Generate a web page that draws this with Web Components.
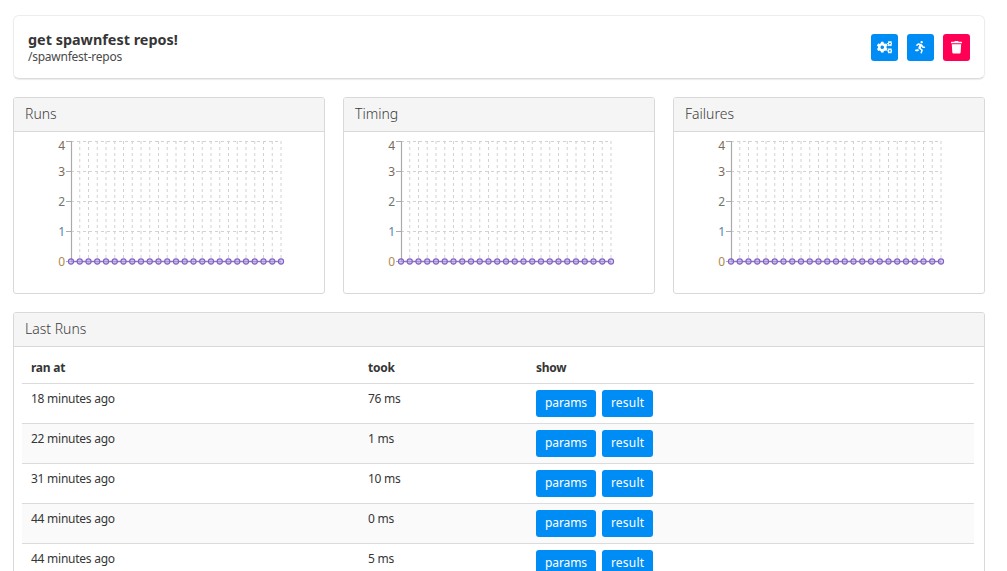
<!DOCTYPE html>
<html lang="en"><head><meta charset="utf-8"><title>get spawnfest repos!</title>
<style>
html,body{margin:0;height:571px;overflow:hidden;background:#fff}
body{font-family:"Noto Sans","Open Sans",sans-serif;color:#363636;font-size:12px}
</style></head><body>
<app-page>
  <page-header title-text="get spawnfest repos!" path="/spawnfest-repos"></page-header>
  <chart-row>
    <app-panel heading="Runs"><line-chart></line-chart></app-panel>
    <app-panel heading="Timing"><line-chart></line-chart></app-panel>
    <app-panel heading="Failures"><line-chart></line-chart></app-panel>
  </chart-row>
  <app-panel heading="Last Runs"><runs-table></runs-table></app-panel>
</app-page>
<script>
const ICONS={
cogs:['0 0 640 512','M512.1 191l-8.2 14.3c-3 5.3-9.4 7.5-15.1 5.4-11.8-4.4-22.6-10.7-32.1-18.6-4.6-3.8-5.8-10.5-2.8-15.7l8.2-14.3c-6.9-8-12.3-17.3-15.9-27.4h-16.5c-6 0-11.2-4.3-12.2-10.3-2-12-2.1-24.6 0-37.1 1-6 6.2-10.4 12.2-10.4h16.5c3.6-10.1 9-19.4 15.9-27.4l-8.2-14.3c-3-5.2-1.9-11.9 2.8-15.7 9.5-7.9 20.4-14.2 32.1-18.6 5.7-2.1 12.1.1 15.1 5.4l8.2 14.3c10.5-1.9 21.2-1.9 31.7 0L552 6.3c3-5.3 9.4-7.5 15.1-5.4 11.8 4.4 22.6 10.7 32.1 18.6 4.6 3.8 5.8 10.5 2.8 15.7l-8.2 14.3c6.9 8 12.3 17.3 15.9 27.4h16.5c6 0 11.2 4.3 12.2 10.3 2 12 2.1 24.6 0 37.1-1 6-6.2 10.4-12.2 10.4h-16.5c-3.6 10.1-9 19.4-15.9 27.4l8.2 14.3c3 5.2 1.9 11.9-2.8 15.7-9.5 7.9-20.4 14.2-32.1 18.6-5.7 2.1-12.1-.1-15.1-5.4l-8.2-14.3c-10.4 1.9-21.2 1.9-31.7 0zm-10.5-58.8c38.5 29.6 82.4-14.3 52.8-52.8-38.5-29.7-82.4 14.3-52.8 52.8zM386.3 286.1l33.7 16.8c10.1 5.8 14.5 18.1 10.5 29.1-8.9 24.2-26.4 46.4-42.6 65.8-7.4 8.9-20.2 11.1-30.3 5.3l-29.1-16.8c-16 13.7-34.6 24.6-54.9 31.7v33.6c0 11.6-8.3 21.6-19.7 23.6-24.6 4.2-50.4 4.4-75.9 0-11.5-2-20-11.9-20-23.6V418c-20.3-7.2-38.9-18-54.9-31.7L74 403c-10 5.8-22.9 3.6-30.3-5.3-16.2-19.4-33.3-41.6-42.2-65.7-4-10.9.4-23.2 10.5-29.1l33.3-16.8c-3.9-20.9-3.9-42.4 0-63.4L12 205.8c-10.1-5.8-14.6-18.1-10.5-29 8.9-24.2 26-46.4 42.2-65.8 7.4-8.9 20.2-11.1 30.3-5.3l29.1 16.8c16-13.7 34.6-24.6 54.9-31.7V57.1c0-11.5 8.2-21.5 19.6-23.5 24.6-4.2 50.5-4.4 76-.1 11.5 2 20 11.9 20 23.6v33.6c20.3 7.2 38.9 18 54.9 31.7l29.1-16.8c10-5.8 22.9-3.6 30.3 5.3 16.2 19.4 33.2 41.6 42.1 65.8 4 10.9.1 23.2-10 29.1l-33.7 16.8c3.9 21 3.9 42.5 0 63.5zm-117.6 21.1c59.2-77-28.7-164.9-105.7-105.7-59.2 77 28.7 164.9 105.7 105.7zm243.4 182.7l-8.2 14.3c-3 5.3-9.4 7.5-15.1 5.4-11.8-4.4-22.6-10.7-32.1-18.6-4.6-3.8-5.8-10.5-2.8-15.7l8.2-14.3c-6.9-8-12.3-17.3-15.9-27.4h-16.5c-6 0-11.2-4.3-12.2-10.3-2-12-2.1-24.6 0-37.1 1-6 6.2-10.4 12.2-10.4h16.5c3.6-10.1 9-19.4 15.9-27.4l-8.2-14.3c-3-5.2-1.9-11.9 2.8-15.7 9.5-7.9 20.4-14.2 32.1-18.6 5.7-2.1 12.1.1 15.1 5.4l8.2 14.3c10.5-1.9 21.2-1.9 31.7 0l8.2-14.3c3-5.3 9.4-7.5 15.1-5.4 11.8 4.4 22.6 10.7 32.1 18.6 4.6 3.8 5.8 10.5 2.8 15.7l-8.2 14.3c6.9 8 12.3 17.3 15.9 27.4h16.5c6 0 11.2 4.3 12.2 10.3 2 12 2.1 24.6 0 37.1-1 6-6.2 10.4-12.2 10.4h-16.5c-3.6 10.1-9 19.4-15.9 27.4l8.2 14.3c3 5.2 1.9 11.9-2.8 15.7-9.5 7.9-20.4 14.2-32.1 18.6-5.7 2.1-12.1-.1-15.1-5.4l-8.2-14.3c-10.4 1.9-21.2 1.9-31.7 0zM501.6 431c38.5 29.6 82.4-14.3 52.8-52.8-38.5-29.6-82.4 14.3-52.8 52.8z'],
run:['0 0 416 512','M272 96c26.51 0 48-21.49 48-48S298.51 0 272 0s-48 21.49-48 48 21.49 48 48 48zM113.69 317.47l-14.8 34.52H32c-17.67 0-32 14.33-32 32s14.33 32 32 32h77.45c19.25 0 36.58-11.44 44.11-29.09l8.79-20.52-10.67-6.3c-17.32-10.23-30.06-25.37-37.99-42.61zM384 223.99h-44.03l-26.06-53.25c-12.5-25.55-35.45-44.23-61.78-50.94l-71.08-21.14c-28.3-6.8-57.77-.55-80.84 17.14l-39.67 30.41c-14.03 10.75-16.69 30.83-5.92 44.86s30.84 16.66 44.86 5.92l39.69-30.41c7.67-5.89 17.44-8 25.27-6.14l14.7 4.37-37.46 87.39c-12.62 29.48-1.31 64.01 26.3 80.31l84.98 50.17-27.47 87.73c-5.28 16.86 4.11 34.81 20.97 40.09 3.19 1 6.41 1.48 9.58 1.48 13.61 0 26.23-8.77 30.52-22.45l31.64-101.06c5.91-20.77-2.89-43.08-21.64-54.39l-61.24-36.14 31.31-78.28 20.27 41.43c8 16.34 24.92 26.89 43.11 26.89H384c17.67 0 32-14.33 32-32s-14.33-31.99-32-31.99z'],
trash:['0 0 448 512','M432 32H312l-9.4-18.7A24 24 0 0 0 281.1 0H166.8a23.72 23.72 0 0 0-21.4 13.3L136 32H16A16 16 0 0 0 0 48v32a16 16 0 0 0 16 16h416a16 16 0 0 0 16-16V48a16 16 0 0 0-16-16zM53.2 467a48 48 0 0 0 47.9 45h245.8a48 48 0 0 0 47.9-45L416 128H32z']};

function define(name,css,html){
  customElements.define(name,class extends HTMLElement{
    connectedCallback(){
      if(this.shadowRoot)return;
      const r=this.attachShadow({mode:'open'});
      r.innerHTML='<style>'+css+'</style>'+(typeof html==='function'?html(this):html);
    }
  });
}
define('app-page',':host{display:flex;flex-direction:column;gap:18px;padding:15px 22px 0 13px}','<slot></slot>');
define('chart-row',':host{display:grid;grid-template-columns:repeat(3,312px);justify-content:space-between}','<slot></slot>');
define('icon-button',`:host{display:flex;align-items:center;justify-content:center;width:27px;height:27px;border-radius:3px;background:var(--bg,#008cf5);padding-top:1px;box-sizing:border-box}
svg{fill:#fff;display:block}`,el=>{const[v,d]=ICONS[el.getAttribute('icon')];const h=12.5;const w=h*v.split(' ')[2]/512;return `<svg viewBox="${v}" style="width:${w}px;height:${h}px"><path d="${d}"/></svg>`});
define('page-header',`:host{display:flex;align-items:center;justify-content:space-between;height:62px;padding:0 14px;border:1px solid #ececec;border-bottom-color:#dcdcdc;border-radius:6px;box-shadow:0 1px 1px rgba(0,0,0,.08)}
.x{padding-top:2px}
.t{font-size:14.4px;font-weight:700;line-height:16px;color:#363636}.p{font-size:12px;line-height:17px;color:#4a4a4a;letter-spacing:-.25px}
.b{display:flex;gap:9px}`,el=>`<div class="x"><div class="t">${el.getAttribute('title-text')}</div><div class="p">${el.getAttribute('path')}</div></div>
<div class="b"><icon-button icon="cogs"></icon-button><icon-button icon="run"></icon-button><icon-button icon="trash" style="--bg:#ff0055"></icon-button></div>`);
define('app-panel',`:host{display:block;border:1px solid #d9d9d9;border-radius:3px;background:#fff}
header{height:33px;line-height:32px;padding:0 11px;background:#f5f5f5;border-bottom:1px solid #d9d9d9;font-size:14px;font-weight:300;color:#3c3c3c;border-radius:2px 2px 0 0}`,
el=>`<header>${el.getAttribute('heading')}</header><slot></slot>`);
define('line-chart',`:host{display:block;height:161px}
svg{display:block}text{font:12px "Noto Sans",sans-serif;text-anchor:end;dominant-baseline:middle}`,()=>{
  const xs=[...Array(25)].map((_,i)=>57+i*8.75);
  const ys=[9,39,69,99,129];
  const colors=['#7a6a58','#7a6a58','#6a7a70','#5a7fa8','#b08a50'];
  let s='<svg width="310" height="161" viewBox="0 0 310 161">';
  xs.slice(1).forEach(x=>s+=`<line x1="${x}" x2="${x}" y1="9" y2="133" stroke="#d2d2d2" stroke-dasharray="3 3"/>`);
  ys.slice(0,4).forEach(y=>s+=`<line x1="57" x2="267" y1="${y+.5}" y2="${y+.5}" stroke="#d2d2d2" stroke-dasharray="3 3"/>`);
  s+='<line x1="57.5" x2="57.5" y1="9" y2="129" stroke="#aaa" stroke-width="1.2"/>';
  ys.forEach((y,i)=>{s+=`<line x1="52" x2="57" y1="${y+.5}" y2="${y+.5}" stroke="#aaa"/>`;
    s+=`<text x="51" y="${i===0?15:y+2}" fill="${colors[i]}">${4-i}</text>`});
  s+='<line x1="57" x2="267" y1="129.5" y2="129.5" stroke="#8a78b8" stroke-width="1.4"/>';
  xs.forEach(x=>s+=`<circle cx="${x}" cy="129.5" r="2.6" fill="rgba(190,170,235,.55)" stroke="#8062c4" stroke-width="1.1"/>`);
  return s+'</svg>';
});
define('small-button',`:host{display:inline-flex;align-items:center;height:27px;padding:0 9px 2px;box-sizing:border-box;border-radius:3px;background:#008cf5;color:#fff;font-size:12px;letter-spacing:var(--ls,-.1px)}`,'<slot></slot>');
define('runs-table',`:host{display:block;padding:0 10px 0 8px}
.r{display:grid;grid-template-columns:337px 168px 1fr;height:39px;border-bottom:1px solid #dbdbdb}
.r>div{padding:6px 9px 0;line-height:17px;letter-spacing:-.25px}
.h{height:36px;font-weight:700}.h>div{padding-top:12px!important}
.z{background:#fafafa}
.a{display:flex;gap:6px;letter-spacing:0!important}`,()=>{
  const rows=[['18 minutes ago','76 ms'],['22 minutes ago','1 ms'],['31 minutes ago','10 ms'],['44 minutes ago','0 ms'],['44 minutes ago','5 ms']];
  return '<div class="r h"><div>ran at</div><div>took</div><div>show</div></div>'+rows.map((r,i)=>`<div class="r${i%2?' z':''}"><div>${r[0]}</div><div>${r[1]}</div><div class="a"><small-button>params</small-button><small-button style="--ls:.2px">result</small-button></div></div>`).join('');
});
</script>
</body></html>
